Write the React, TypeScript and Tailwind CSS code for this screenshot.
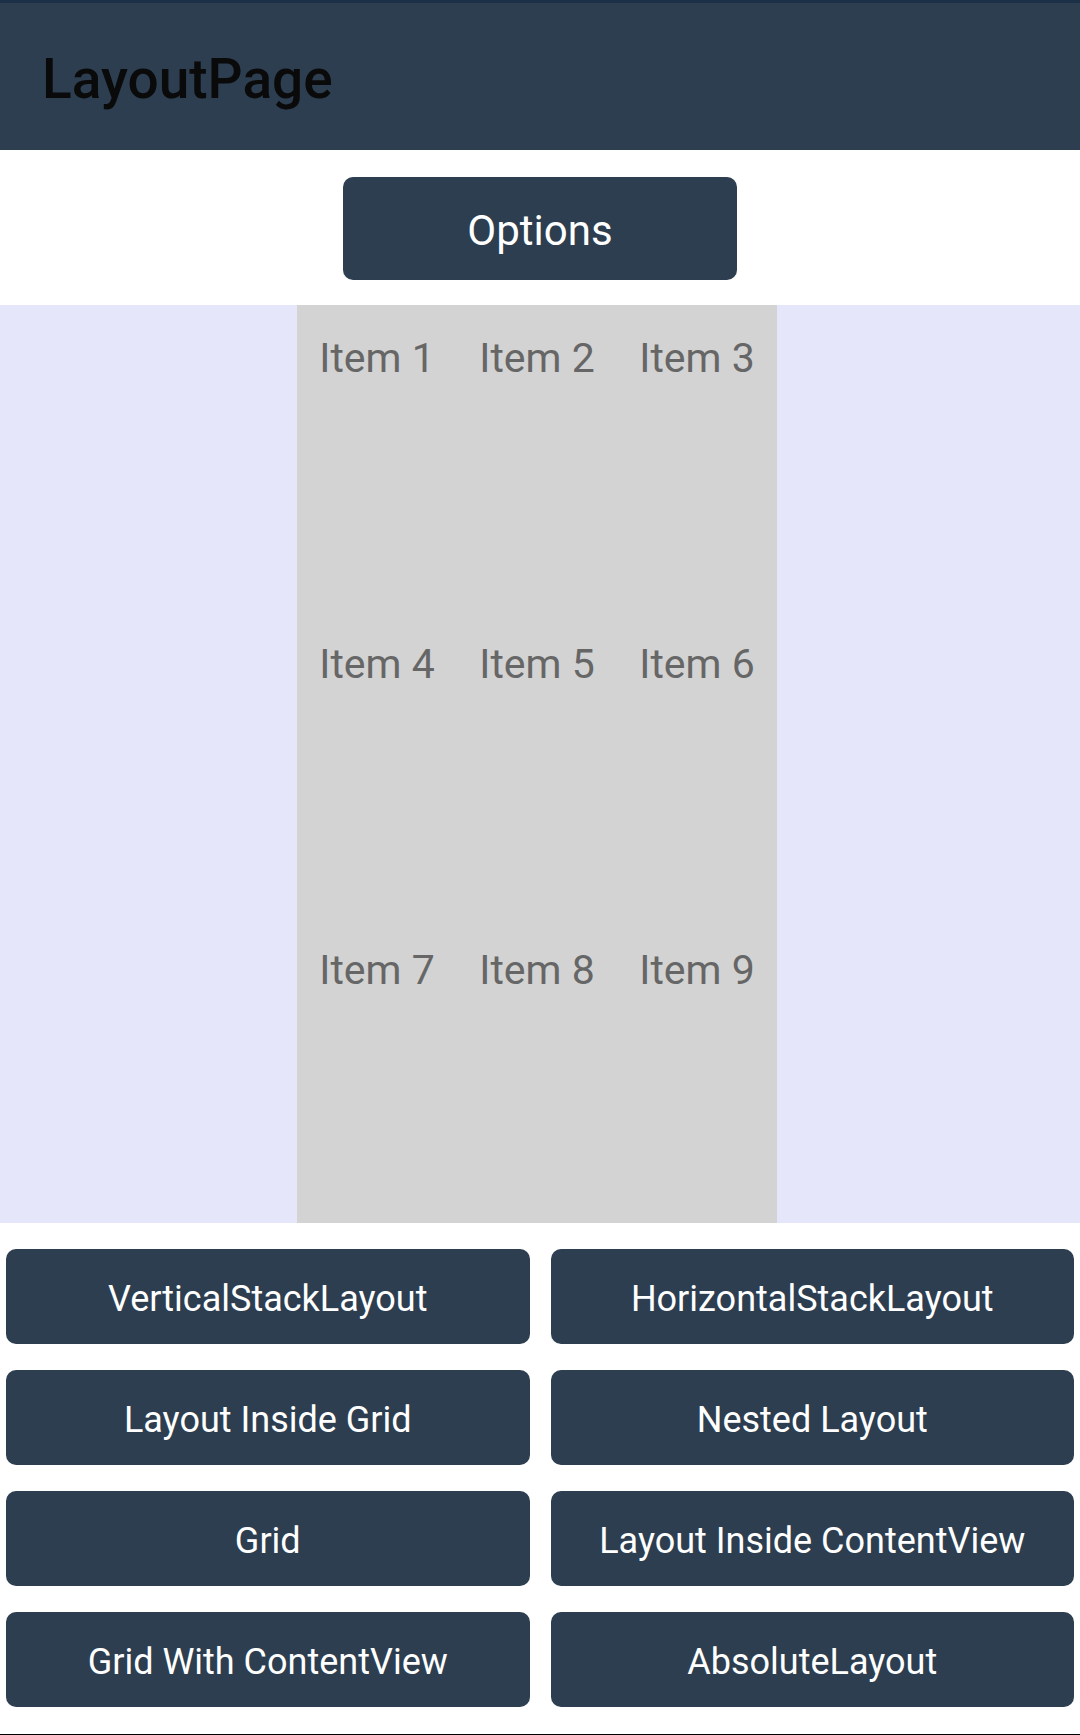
import React from 'react';

const items = ['Item 1', 'Item 2', 'Item 3', 'Item 4', 'Item 5', 'Item 6', 'Item 7', 'Item 8', 'Item 9'];

const layouts = [
  'VerticalStackLayout',
  'HorizontalStackLayout',
  'Layout Inside Grid',
  'Nested Layout',
  'Grid',
  'Layout Inside ContentView',
  'Grid With ContentView',
  'AbsoluteLayout',
];

export default function App() {
  return (
    <div className="w-[1080px] h-[1735px] bg-white flex flex-col font-['Roboto',sans-serif] border-b border-black">
      {/* Barra de título */}
      <header className="h-[150px] shrink-0 bg-[#2c3e50] border-t-[3px] border-[#1c3148] flex items-center pl-[42px] pt-[5px]">
        <h1 className="text-[55px] font-medium text-[#0a0a0a] leading-none">LayoutPage</h1>
      </header>

      {/* Botón de opciones */}
      <div className="h-[155px] shrink-0 flex justify-center pt-[27px]">
        <button className="w-[394px] h-[103px] rounded-[10px] bg-[#2c3e50] text-white text-[42px] leading-none pt-[4px]">
          Options
        </button>
      </div>

      {/* Grid 3x3 */}
      <div className="h-[918px] shrink-0 bg-[#e6e6fa] pl-[297px]">
        <div className="w-[480px] h-full bg-[#d3d3d3] grid grid-cols-3 grid-rows-3">
          {items.map((item) => (
            <div key={item} className="flex justify-center pt-[31px]">
              <span className="text-[41px] leading-[44px] text-[#666666]">{item}</span>
            </div>
          ))}
        </div>
      </div>

      {/* Botones de layouts */}
      <div className="grid grid-cols-2 gap-x-[21px] gap-y-[26px] px-[6px] pt-[26px]">
        {layouts.map((label) => (
          <button
            key={label}
            className="h-[95px] rounded-[10px] bg-[#2c3e50] text-white text-[36px] leading-none pt-[4px]"
          >
            {label}
          </button>
        ))}
      </div>
    </div>
  );
}
